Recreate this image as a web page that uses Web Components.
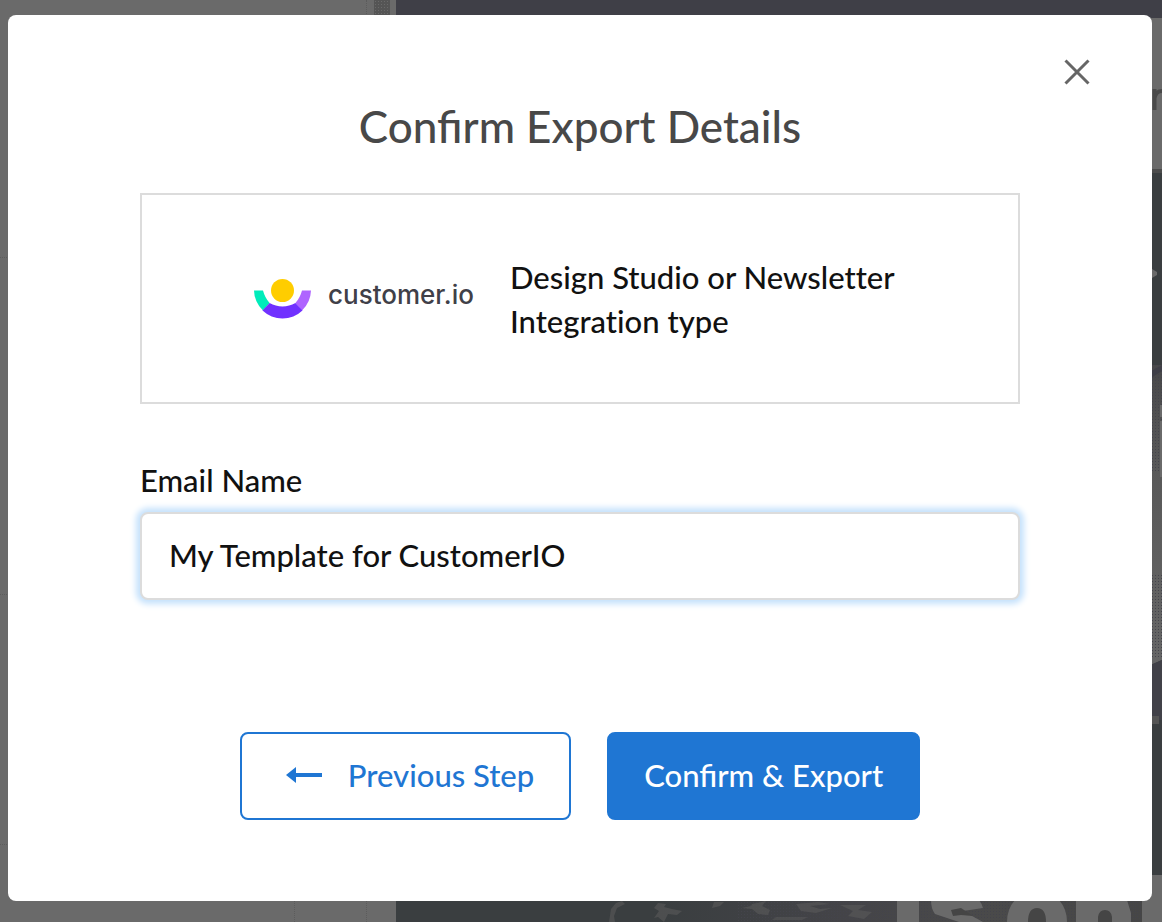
<!DOCTYPE html>
<html lang="en">
<head>
<meta charset="utf-8">
<meta name="viewport" content="width=device-width, initial-scale=1">
<title>Confirm Export Details</title>
<style>
html, body { margin: 0; min-height: 100%; }
body { font-family: Lato, "Liberation Sans", sans-serif; font-weight: 500; color: #111; background: #6a6a6a; }
</style>
</head>
<body>
<editor-backdrop></editor-backdrop>
<export-dialog heading="Confirm Export Details">
  <integration-card>
    <customer-logo slot="logo"></customer-logo>
    Design Studio or Newsletter Integration type
  </integration-card>
  <text-field label="Email Name" value="My Template for CustomerIO"></text-field>
  <action-button slot="actions" kind="outline" arrow>Previous Step</action-button>
  <action-button slot="actions">Confirm &amp; Export</action-button>
</export-dialog>

<script>
class BaseElement extends HTMLElement {
  connectedCallback() {
    if (this.shadowRoot) return;
    this.attachShadow({ mode: 'open' }).innerHTML =
      '<style>*{box-sizing:border-box}' + this.constructor.styles + '</style>' + this.render();
  }
}

/* The dimmed template editor that lies under the dialog. */
customElements.define('editor-backdrop', class extends BaseElement {
  static styles = `
    :host { position: fixed; inset: 0; display: grid; grid-template-columns: 396px 1fr; overflow: hidden; background: #6a6a6a; }
    .side { display: grid; grid-template-columns: 295px 72px 7px 16px 6px; }
    .side div { border-right: 1px dotted #5c5c5c; }
    .side .rows { border: 0; display: grid; grid-template-rows: 258px 337px 250px 1fr; }
    .side .rows i { border-bottom: 1px dotted #5c5c5c; }
    .side .rows i:last-child { border-bottom: 0; border-right: 1px dotted #5c5c5c; }
    .side .bar { height: 18px; background: radial-gradient(circle, #6a6a6a 1px, transparent 1px) 0 0 / 3px 3px #555; }
    .side .bar, .side .plain { border: 0; }
    .canvas { display: grid; grid-template-rows: 18px 155px 1fr; min-height: 0; min-width: 0; }
    .top { background: #3f3f47; }
    .tools { border-bottom: 4px solid #4c4c4c; }
    svg { display: block; width: 100%; height: 100%; }
  `;
  render() {
    return `<div class="side"><div class="rows"><i></i><i></i><i></i><i></i></div><div></div><div class="plain"></div><div class="bar"></div></div>
    <div class="canvas" aria-hidden="true">
      <div class="top"></div>
      <div class="tools"><svg viewBox="0 0 766 151" preserveAspectRatio="xMaxYMin slice"><path d="M758.500 92V71M758.500 80Q760 73 766 73" fill="none" stroke="#494949" stroke-width="4"/></svg></div>
      <svg viewBox="0 0 766 749" preserveAspectRatio="xMaxYMin slice">
        <defs>
          <pattern id="grain" width="3" height="3" patternUnits="userSpaceOnUse"><path d="M0 0h1v1H0z" fill="#44444c"/></pattern>
          <linearGradient id="sky" x1="0" x2="0" y1="0" y2="1"><stop offset="0" stop-color="#484849"/><stop offset=".35" stop-color="#595959"/><stop offset="1" stop-color="#666"/></linearGradient>
          <linearGradient id="water"><stop offset="0" stop-color="#3a3e40"/><stop offset=".35" stop-color="#3a3e40"/><stop offset=".6" stop-color="#444448"/><stop offset=".8" stop-color="#4a4a4a"/><stop offset="1" stop-color="#464646"/></linearGradient>
        </defs>
        <path d="M0 0H766V749H0z" fill="#3a3e40"/>
        <path d="M750 192H766V487L750 494z" fill="url(#sky)"/>
        <path d="M750 192H766V300H750zM750 400H766V485H750z" fill="url(#grain)"/>
        <path d="M750 201L766 192V198L750 208z" fill="#3f3f47"/>
        <path d="M764 232h2v12h-2zM764 248h2v56h-2z" fill="#6a6a6a"/>
        <path d="M756 96l5 3v3l-5 3z" fill="#6a6a6a"/>
        <path d="M750 494L766 487V547H750z" fill="#414148"/>
        <path d="M756 543h7v8h-7z" fill="#555"/>
        <path d="M0 727H746V749H0z" fill="url(#water)"/>
        <path d="M340 727H746V749H340z" fill="url(#grain)"/>
        <g fill="#5a5a5a">
          <path d="M220 730l6-2 3 3-8 4-3 8 1 6h-6l2-13zM262 730l8 1-2 3 8 2 10 2-5 4-9-1-4 8-6-5-4 1 5-7-5-3zM318 729h10l-4 4-8 2zM356 731l14-3-4 5 8 4-2 5-10-1-6-5-10-1 9-2zM400 731l22-2 12 2-20 2 10 3 12-1-16 5-15-2zM444 732h26l-8 5 14 2-8 7-16-3 5-5z" opacity=".6"/>
          <path d="M380 744h32l-6 3h-30z" opacity=".5"/>
        </g>
        <path d="M746 702H766V749H746z" fill="#6a6a6a"/>
        <g fill="#6a6a6a">
          <path d="M501 727h22v22h-22z"/>
          <path d="M535 727h48q3 4 4 8l-20 3 20 11h-24l-24-8q-4-5-4-14z"/>
          <path d="M611 749q0-13 8-22h44q8 9 8 22zM680 727h51l4 13v9h-55z"/>
        </g>
        <path d="M632 749q0-14 9-14t9 14zM702 749v-5q1-7 7-7t7 7v5zM555 737l10-2 12 8-12-1-8 1z" fill="#454545"/>
      </svg>
    </div>`;
  }
});

customElements.define('export-dialog', class extends BaseElement {
  static styles = `
    :host { position: relative; display: block; padding: 15px 10px 21px 8px; }
    section { background: #fff; border-radius: 8px; padding: 38px 56px 81px; }
    header { display: flex; justify-content: flex-end; }
    button { display: block; width: 38px; height: 36px; padding: 6px; border: 0; background: none; cursor: pointer; }
    svg { display: block; width: 26px; height: 26px; }
    .body { max-width: 880px; margin: 0 auto; }
    h1 { margin: 9px 0 39px; font-size: 44px; line-height: 56px; font-weight: 500; text-align: center; color: #484848; }
    footer { display: flex; flex-wrap: wrap; justify-content: center; gap: 36px; margin-top: 132px; }
  `;
  render() {
    return `<section role="dialog" aria-labelledby="title">
      <header><button type="button" aria-label="Close"><svg viewBox="0 0 26 26"><path d="M1.500 1.500L24.500 24.500M24.500 1.500L1.500 24.500" stroke="#666" stroke-width="3" fill="none"/></svg></button></header>
      <div class="body"><h1 id="title">${this.getAttribute('heading')}</h1><slot></slot><footer><slot name="actions"></slot></footer></div>
    </section>`;
  }
});

customElements.define('integration-card', class extends BaseElement {
  static styles = `
    :host { display: flex; align-items: center; gap: 36px; min-height: 211px; padding: 0 112px; border: 2px solid #dcdcdc; box-sizing: border-box; }
    p { margin: 0; max-width: 400px; font-size: 31px; line-height: 44px; font-variant-ligatures: none; }
  `;
  render() { return '<slot name="logo"></slot><p><slot></slot></p>'; }
});

customElements.define('customer-logo', class extends BaseElement {
  static styles = `
    :host { display: flex; align-items: center; gap: 16px; flex: none; width: 220px; }
    svg { flex: none; width: 58px; height: 42px; }
    span { font: 500 26px/36px Inter, "Open Sans", sans-serif; color: #404048; padding-bottom: 8px; }
  `;
  render() {
    return `<svg viewBox="0 0 58 42" aria-hidden="true">
      <path d="M0 12.500H9Q11 20 15.600 25L9 32.500A29 29 0 0 1 0 12.500z" fill="#00ecbb"/>
      <path d="M57 12.500H48Q46 20 41.400 25L48 32.500A29 29 0 0 0 57 12.500z" fill="#af64ff"/>
      <path d="M15.600 25A26 26 0 0 0 41.400 25L48.500 32.500A29 29 0 0 1 8.500 32.500z" fill="#7131ff"/>
      <circle cx="28.500" cy="12.500" r="11.500" fill="#ffcd00"/></svg><span>customer.io</span>`;
  }
});

customElements.define('text-field', class extends BaseElement {
  static styles = `
    :host { display: block; margin-top: 54px; }
    label { display: block; font-size: 31px; line-height: 44px; margin-bottom: 10px; }
    input { display: block; width: 100%; height: 88px; padding: 0 27px 2px; border: 2px solid #dcdcdc; border-radius: 8px; outline: 0; background: #fff; color: #111; font: inherit; font-size: 31px; box-shadow: 0 0 6px 4px #c4e1fc; }
  `;
  render() {
    return `<label for="field">${this.getAttribute('label')}</label><input id="field" type="text" value="${this.getAttribute('value')}">`;
  }
});

customElements.define('action-button', class extends BaseElement {
  static styles = `
    :host { display: block; }
    button { display: flex; align-items: center; justify-content: center; gap: 26px; height: 88px; padding: 0 35px 2px; border: 2px solid #1f76d3; border-radius: 8px; background: #1f76d3; color: #fff; font: inherit; font-size: 31px; line-height: 44px; cursor: pointer; }
    :host([kind=outline]) button { background: #fff; color: #1f76d3; padding: 0 35px 2px 44px; }
    svg { width: 36px; height: 18px; }
  `;
  render() {
    const arrow = this.hasAttribute('arrow') ? '<svg viewBox="0 0 36 18" aria-hidden="true"><path d="M0 9L10 1V7H36V11H10V17z" fill="currentColor"/></svg>' : '';
    return `<button type="button">${arrow}<span><slot></slot></span></button>`;
  }
});
</script>
</body>
</html>
